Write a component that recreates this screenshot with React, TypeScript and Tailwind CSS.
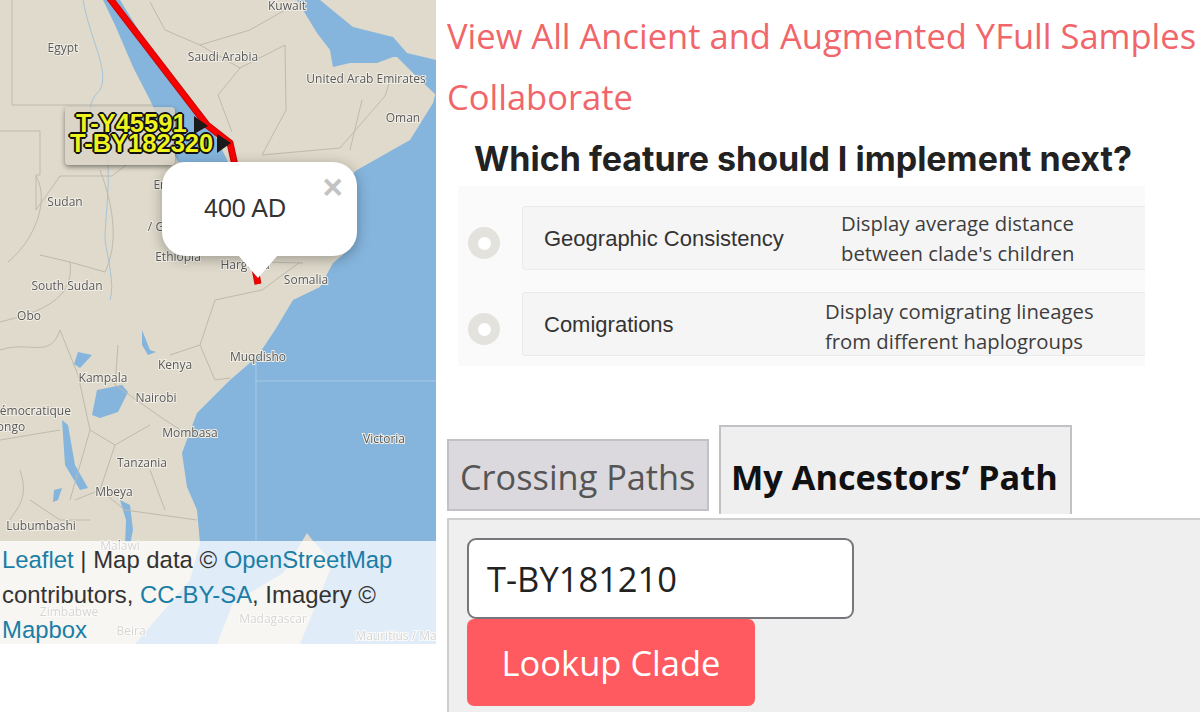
import React from 'react';

const labels = [
  { t: 'Kuwait', x: 287, y: 10 },
  { t: 'Egypt', x: 63, y: 52 },
  { t: 'Saudi Arabia', x: 223, y: 61 },
  { t: 'United Arab Emirates', x: 366, y: 83 },
  { t: 'Oman', x: 403, y: 122 },
  { t: 'Sudan', x: 65, y: 206 },
  { t: 'Eritrea', x: 172, y: 189 },
  { t: '/ Gojam', x: 170, y: 231 },
  { t: 'Ethiopia', x: 178, y: 261 },
  { t: 'Hargeisa', x: 245, y: 269 },
  { t: 'Somalia', x: 306, y: 284 },
  { t: 'South Sudan', x: 67, y: 290 },
  { t: 'Obo', x: 29, y: 320 },
  { t: 'Kenya', x: 175, y: 369 },
  { t: 'Muqdisho', x: 258, y: 361 },
  { t: 'Kampala', x: 103, y: 382 },
  { t: 'Nairobi', x: 156, y: 402 },
  { t: 'Démocratique', x: 31, y: 415 },
  { t: 'ongo', x: 11, y: 431 },
  { t: 'Mombasa', x: 190, y: 437 },
  { t: 'Victoria', x: 384, y: 443 },
  { t: 'Tanzania', x: 142, y: 467 },
  { t: 'Mbeya', x: 114, y: 496 },
  { t: 'Lubumbashi', x: 41, y: 530 },
  { t: 'Malawi', x: 120, y: 550 },
  { t: 'Zimbabwe', x: 69, y: 616 },
  { t: 'Beira', x: 131, y: 635 },
  { t: 'Madagascar', x: 273, y: 623 },
  { t: 'Mauritius / Ma', x: 396, y: 640 },
];

const borders = [
  'M12 0V105H152',
  'M0 131H40V175H36V210L60 176H112L126 165',
  'M36 176C50 200 35 240 8 262',
  'M100 170C115 210 118 245 105 272L70 262L40 255',
  'M70 262C75 300 40 312 0 322',
  'M150 2L165 30L200 45L250 30L285 10',
  'M200 45L240 68L285 45L286 110L262 155',
  'M240 68L218 95L232 132',
  'M262 155L340 148L385 96L392 75',
  'M350 150L362 100',
  'M300 262L262 290L215 300L200 345L170 355',
  'M303 263L262 262L230 245',
  'M200 345L215 380L230 378',
  'M118 345L115 385L165 420L190 436',
  'M60 330L78 375L90 430L70 500',
  'M0 440L60 430',
  'M90 430L115 445L150 425',
  'M115 445L100 490L125 510L197 520',
  'M75 500L100 490',
  'M30 500L60 520L90 520',
  'M150 470L165 510',
  'M0 350C30 340 50 360 60 330',
  'M20 470C30 500 15 510 10 520',
];

const Popup: React.FC = () => (
  <div className="absolute left-[162px] top-[162px] w-[195px] h-[94px] rounded-[24px] bg-white shadow-[0_3px_14px_rgba(0,0,0,0.3)]">
    <div className="pt-[32px] pl-[42px] text-[25px] leading-[29px] text-[#333]">400 AD</div>
    <div className="absolute right-[14px] top-[7px] text-[35px] leading-[35px] font-bold text-[#c3c3c3]">×</div>
    <div className="absolute left-[76px] top-[93px] w-0 h-0 border-l-[20px] border-r-[20px] border-t-[23px] border-l-transparent border-r-transparent border-t-white" />
  </div>
);

const MapPane: React.FC = () => (
  <div className="relative w-[436px] h-[644px] overflow-hidden bg-[#dfdacb] font-['Liberation_Sans',sans-serif]">
    <svg width="436" height="644" viewBox="0 0 436 644" className="absolute inset-0 blur-[0.4px]">
      {/* sea */}
      <path
        fill="#85b5dd"
        d="M436 92L433 103L410 140L357 170L345 180V253L333 263L320 287L293 300L275 330L257 357L230 380L197 413L182 453L187 487L197 510L200 543L190 580L135 644H436Z"
      />
      <path fill="#85b5dd" d="M103 0L115 25L133 67L150 100L165 133L178 162H228L215 135L190 105L157 60L120 0Z" />
      <path fill="#85b5dd" d="M297 0L317 33L330 50L333 67L350 63L377 63L393 57L397 57L415 75L436 95V60L407 53L393 37L353 27L320 0Z" />
      <path fill="#dfdacb" d="M307 533L313 541L333 563L300 644H217L233 603L283 573Z" />
      {/* lakes */}
      <path fill="#85b5dd" d="M97 390L122 385L128 392L118 412L100 418L92 415Z" />
      <path fill="#85b5dd" d="M62 420L68 425L75 465L88 488L80 490L65 465Z" />
      <path fill="#85b5dd" d="M120 500L130 505L133 530L130 545H125L126 520Z" />
      <path fill="#85b5dd" d="M142 330L150 350L156 352L148 355L142 345Z" />
      <path fill="#85b5dd" d="M78 352L92 355L80 368L74 364Z" />
      <path fill="#85b5dd" d="M54 490L62 488L58 500L53 502Z" />
      {/* rivers */}
      <path fill="none" stroke="#a5c3d6" strokeWidth="1" d="M83 0C90 40 110 70 100 90C90 100 85 110 100 135C115 160 105 210 105 240C108 260 115 285 110 300" />
      {/* grid lines over the sea */}
      <path fill="none" stroke="#a6c9e6" strokeWidth="1" d="M255 381H436M256 358V541" />
      {/* borders */}
      {borders.map((d) => (
        <path key={d} d={d} fill="none" stroke="#bdbaad" strokeWidth="1" />
      ))}
      {/* labels */}
      {labels.map((l) => (
        <text
          key={l.t}
          x={l.x}
          y={l.y}
          textAnchor="middle"
          fontFamily="Open Sans, sans-serif"
          fontSize="12"
          fill="#59595a"
          stroke="#f1eee6"
          strokeWidth="2"
          paintOrder="stroke"
        >
          {l.t}
        </text>
      ))}
      {/* path */}
      <path d="M108 -4L207 125L230 143L236 170L258 284" fill="none" stroke="#c80a0a" strokeWidth="7" />
      <path d="M108 -4L207 125L230 143L236 170L258 284" fill="none" stroke="#f70000" strokeWidth="5" />
      <path d="M194 116L208 126L194 134Z" fill="#1a1a1a" />
      <path d="M217 134L231 143L217 153Z" fill="#1a1a1a" />
    </svg>

    {/* tooltip labels */}
    <div className="absolute left-[65px] top-[107px] w-[110px] h-[58px] rounded-[4px] bg-[#d8d3c5]/80 shadow-[0_2px_5px_rgba(0,0,0,0.45)]" />
    <div className="absolute left-[76px] top-[110px] text-[25.5px] leading-[26px] font-bold text-[#eef21e] [text-shadow:-2px_0_0_#111,2px_0_0_#111,0_-2px_0_#111,0_2px_0_#111,-1px_-1px_0_#111,1px_1px_0_#111,1px_-1px_0_#111,-1px_1px_0_#111]">
      T-Y45591
    </div>
    <div className="absolute left-[70px] top-[130px] text-[25.5px] leading-[26px] font-bold text-[#eef21e] [text-shadow:-2px_0_0_#111,2px_0_0_#111,0_-2px_0_#111,0_2px_0_#111,-1px_-1px_0_#111,1px_1px_0_#111,1px_-1px_0_#111,-1px_1px_0_#111]">
      T-BY182320
    </div>

    <Popup />

    <div className="absolute left-0 right-0 bottom-0 h-[103px] pl-[2px] pt-[1px] bg-white/75 text-[23.9px] leading-[35px] text-[#333]">
      <a className="text-[#1a7ea6]">Leaflet</a> | Map data © <a className="text-[#1a7ea6]">OpenStreetMap</a>
      <br />
      contributors, <a className="text-[#1a7ea6]">CC-BY-SA</a>, Imagery ©
      <br />
      <a className="text-[#1a7ea6]">Mapbox</a>
    </div>
  </div>
);

const Radio: React.FC = () => (
  <div className="flex w-[32px] h-[32px] shrink-0 items-center justify-center rounded-full bg-[#e3e2dd]">
    <div className="w-[13px] h-[13px] rounded-full bg-white" />
  </div>
);

type OptionProps = { name: string; lines: string[]; nameWidth: string; descTop: string };

const Option: React.FC<OptionProps> = ({ name, lines, nameWidth, descTop }) => (
  <div className="flex items-center">
    <div className="ml-[10px] mt-[10px]">
      <Radio />
    </div>
    <div className="ml-[22px] flex flex-1 h-[64px] items-center rounded-l-[4px] border border-r-0 border-[#ebeaea] bg-[#f6f5f5]">
      <div className={`${nameWidth} pl-[21px] text-[22px] text-[#333] font-['Liberation_Sans',sans-serif]`}>{name}</div>
      <div className={`${descTop} text-[20.3px] leading-[30px] text-[#3d3d3d]`}>
        {lines.map((l) => (
          <div key={l}>{l}</div>
        ))}
      </div>
    </div>
  </div>
);

const Survey: React.FC = () => (
  <div className="ml-[22px] w-[687px] mt-[12px]">
    <div className="pl-[16px] h-[40px] text-[34px] leading-[40px] font-bold text-[#222] font-['Inter',sans-serif] whitespace-nowrap">
      Which feature should I implement next?
    </div>
    <div className="mt-[7px] h-[180px] bg-[#fbfafb] pt-[20px] flex flex-col gap-[22px]">
      <Option name="Geographic Consistency" lines={['Display average distance', "between clade's children"]} nameWidth="w-[318px]" descTop="pt-0" />
      <Option name="Comigrations" lines={['Display comigrating lineages', 'from different haplogroups']} nameWidth="w-[302px]" descTop="pt-[4px]" />
    </div>
  </div>
);

const Tabs: React.FC = () => (
  <div className="ml-[11px] mt-[59px] flex items-start gap-[10px] h-[93px] text-[34.3px] leading-[45px]">
    <div className="mt-[14px] w-[262px] h-[72px] border-2 border-[#c3c1c5] bg-[#dbd9dd] pl-[11px] pt-[13px] text-[#555] whitespace-nowrap">
      Crossing Paths
    </div>
    <div className="w-[353px] h-[89px] border-2 border-b-0 border-[#c3c1c5] bg-[#f0eff0] pl-[10px] pt-[27px] font-bold text-[#111] whitespace-nowrap">
      My Ancestors’ Path
    </div>
  </div>
);

const Lookup: React.FC = () => (
  <div className="ml-[11px] flex-1 border-l-2 border-t-2 border-[#cfcece] bg-[#f0eff0] pl-[18px] pt-[18px] text-[34.5px]">
    <div className="w-[387px] h-[81px] flex items-center rounded-[9px] border-2 border-[#76767b] bg-white pl-[18px] text-[#222]">
      T-BY181210
    </div>
    <div className="w-[288px] h-[87px] flex items-center justify-center rounded-[7px] bg-[#ff5a5f] text-white">
      Lookup Clade
    </div>
  </div>
);

const App: React.FC = () => {
  return (
    <div className="flex w-[1200px] h-[712px] overflow-hidden bg-white font-['Open_Sans',sans-serif]">
      <MapPane />
      <div className="flex flex-1 flex-col min-w-0">
        <div className="ml-[11px] pt-[5px] text-[34.5px] leading-[61px] text-[#f0666a] whitespace-nowrap">
          <div>View All Ancient and Augmented YFull Samples</div>
          <div>Collaborate</div>
        </div>
        <Survey />
        <Tabs />
        <Lookup />
      </div>
    </div>
  );
};

export default App;
